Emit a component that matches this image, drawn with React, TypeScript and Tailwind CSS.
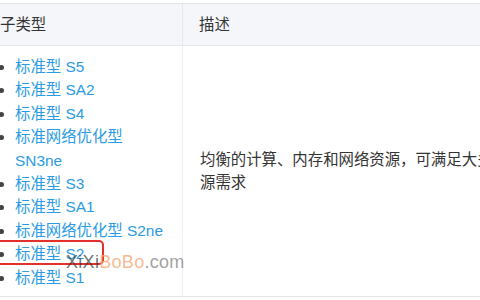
import React from "react";

const types = [
  "标准型 S5",
  "标准型 SA2",
  "标准型 S4",
  "标准网络优化型 SN3ne",
  "标准型 S3",
  "标准型 SA1",
  "标准网络优化型 S2ne",
  "标准型 S2",
  "标准型 S1",
];

export default function App() {
  return (
    <div
      className="relative h-[300px] w-[480px] overflow-hidden bg-white text-[15.4px] text-[#333]"
      style={{ fontFamily: '"Liberation Sans", "Noto Sans CJK SC", sans-serif' }}
    >
      <div className="mt-[3px] w-[640px] border-y border-[#e3e5ea]">
        {/* header */}
        <div className="flex h-[42px] items-center border-b border-[#e6e8ed] bg-[#f5f6fa]">
          <div className="w-[183px] shrink-0 border-r border-[#e6e8ed] leading-[42px]">子类型</div>
          <div className="pl-[16px]">描述</div>
        </div>
        {/* body */}
        <div className="flex h-[250px]">
          <div className="w-[183px] shrink-0 border-r border-[#eceef2] pt-[9px]">
            <ul className="list-disc pl-[15px] text-[#2b9be4] leading-[23.4px] marker:text-[#444]">
              {types.map((t) => (
                <li key={t} className="pr-[12px]">
                  {t}
                </li>
              ))}
            </ul>
          </div>
          <div className="flex w-[410px] items-center pl-[17px] pr-[3px] leading-[23.4px]">
            均衡的计算、内存和网络资源，可满足大多数场景下的资源需求
          </div>
        </div>
      </div>

      {/* red highlight box */}
      <div className="absolute left-[-10px] top-[240px] h-[25px] w-[114px] rounded-[5px] border-2 border-[#e3302b]" />

      {/* watermark */}
      <div className="absolute left-[66px] top-[250px] text-[18px] leading-[24px] tracking-[0.3px]">
        <span className="text-[#333]/70">XiXi</span>
        <span className="text-[#f5a878]/80">BoBo</span>
        <span className="text-[#888]/80">.com</span>
      </div>
    </div>
  );
}
